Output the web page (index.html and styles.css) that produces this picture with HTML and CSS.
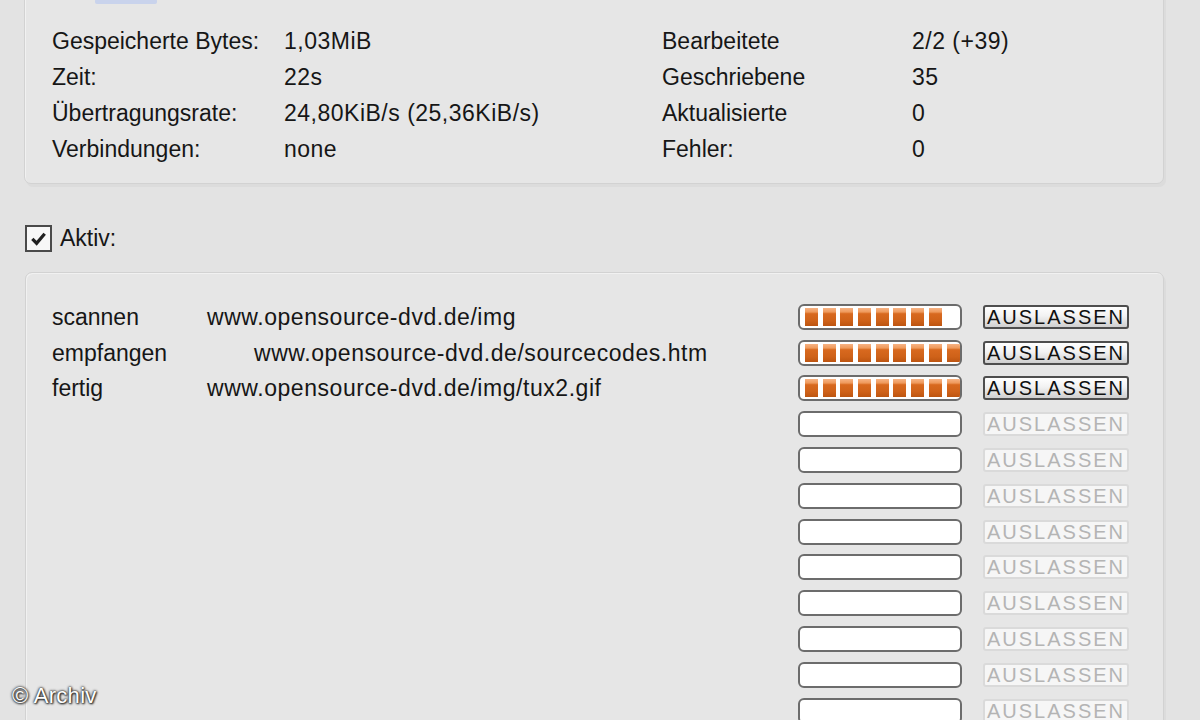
FILE: index.html
```html
<!DOCTYPE html>
<html lang="de">
<head>
<meta charset="utf-8">
<title>Statistik</title>
<link rel="stylesheet" href="styles.css">
</head>
<body>
<div class="page">
  <section class="group stats">
    <span class="legend"></span>
    <div class="stat-grid">
      <span>Gespeicherte Bytes:</span><span class="val">1,03MiB</span><span>Bearbeitete</span><span class="val">2/2 (+39)</span>
      <span>Zeit:</span><span class="val">22s</span><span>Geschriebene</span><span class="val">35</span>
      <span>Übertragungsrate:</span><span class="val">24,80KiB/s (25,36KiB/s)</span><span>Aktualisierte</span><span class="val">0</span>
      <span>Verbindungen:</span><span class="val">none</span><span>Fehler:</span><span class="val">0</span>
    </div>
  </section>

  <label class="check-row">
    <span class="checkbox">
      <svg viewBox="0 0 20 20" width="19" height="19"><path d="M3.5 10.5 L8 15 L16.5 5" fill="none" stroke="#202020" stroke-width="3.4" stroke-linejoin="miter"/></svg>
    </span>
    <span>Aktiv:</span>
  </label>

  <section class="group jobs">
    <div class="job">
      <span class="name">scannen</span><span class="url">www.opensource-dvd.de/img</span>
      <span class="bar"><i></i><i></i><i></i><i></i><i></i><i></i><i></i><i></i></span>
      <span class="btn">AUSLASSEN</span>
    </div>
    <div class="job">
      <span class="name">empfangen</span><span class="url indent">www.opensource-dvd.de/sourcecodes.htm</span>
      <span class="bar"><i></i><i></i><i></i><i></i><i></i><i></i><i></i><i></i><i></i></span>
      <span class="btn">AUSLASSEN</span>
    </div>
    <div class="job">
      <span class="name">fertig</span><span class="url">www.opensource-dvd.de/img/tux2.gif</span>
      <span class="bar"><i></i><i></i><i></i><i></i><i></i><i></i><i></i><i></i><i></i></span>
      <span class="btn">AUSLASSEN</span>
    </div>
    <div class="job"><span class="name"></span><span class="url"></span><span class="bar"></span><span class="btn off">AUSLASSEN</span></div>
    <div class="job"><span class="name"></span><span class="url"></span><span class="bar"></span><span class="btn off">AUSLASSEN</span></div>
    <div class="job"><span class="name"></span><span class="url"></span><span class="bar"></span><span class="btn off">AUSLASSEN</span></div>
    <div class="job"><span class="name"></span><span class="url"></span><span class="bar"></span><span class="btn off">AUSLASSEN</span></div>
    <div class="job"><span class="name"></span><span class="url"></span><span class="bar"></span><span class="btn off">AUSLASSEN</span></div>
    <div class="job"><span class="name"></span><span class="url"></span><span class="bar"></span><span class="btn off">AUSLASSEN</span></div>
    <div class="job"><span class="name"></span><span class="url"></span><span class="bar"></span><span class="btn off">AUSLASSEN</span></div>
    <div class="job"><span class="name"></span><span class="url"></span><span class="bar"></span><span class="btn off">AUSLASSEN</span></div>
    <div class="job"><span class="name"></span><span class="url"></span><span class="bar"></span><span class="btn off">AUSLASSEN</span></div>
  </section>
</div>
<div class="credit">© Archiv</div>
</body>
</html>
```
FILE: styles.css
```css
html, body {
  margin: 0;
  padding: 0;
  background: #e3e3e3;
  overflow: hidden;
}
body {
  width: 1200px;
  height: 720px;
  position: relative;
  font-family: "Liberation Sans", Arial, sans-serif;
  font-size: 23px;
  color: #161616;
}
.page {
  display: flex;
  flex-direction: column;
}
.group {
  border: 1px solid #d2d2d2;
  border-radius: 7px;
  background: #e6e6e6;
  box-shadow: inset 1px 1px 0 #f1f1f1, 2px 3px 0 #dcdcdc;
  box-sizing: border-box;
  position: relative;
}
.stats {
  margin: -22px 0 0 24px;
  width: 1140px;
  height: 206px;
  padding: 44px 0 0 27px;
}
.legend {
  position: absolute;
  top: 20px;
  left: 70px;
  width: 62px;
  height: 5px;
  border-radius: 2px;
  background: #c9d3ec;
}
.stat-grid {
  display: grid;
  grid-template-columns: 232px 378px 250px auto;
  grid-auto-rows: 36px;
  align-items: center;
  line-height: 26px;
}
.val { letter-spacing: 0.5px; }
.check-row {
  display: flex;
  align-items: center;
  gap: 8px;
  margin: 40px 0 0 25px;
  height: 28px;
}
.checkbox {
  width: 23px;
  height: 23px;
  border: 2px solid #4a4a4a;
  background: #f7f7f7;
  display: flex;
  align-items: center;
  justify-content: center;
}
.jobs {
  margin: 20px 0 0 25px;
  width: 1139px;
  height: 520px;
  padding: 26px 0 0 26px;
}
.job {
  display: grid;
  grid-template-columns: 155px 591px 164px 146px;
  height: 35.8px;
  align-items: center;
}
.job .btn { margin-left: 21px; }
.name, .url {
  white-space: nowrap;
  line-height: 26px;
}
.url { letter-spacing: 0.55px; }
.url.indent { padding-left: 47px; }
.bar {
  height: 26px;
  box-sizing: border-box;
  border: 2px solid #6c6c6c;
  border-radius: 6px;
  background: #ffffff;
  display: flex;
  align-items: center;
  gap: 4.7px;
  padding-left: 5px;
  overflow: hidden;
}
.bar i {
  display: block;
  flex: 0 0 13px;
  height: 18px;
  background: linear-gradient(#f7b384 0, #ef9a5c 22%, #d8691f 32%, #cf6219 70%, #bd5511 100%);
}
.btn {
  width: 146px;
  height: 24px;
  box-sizing: border-box;
  border: 2px solid #4e4e4e;
  border-radius: 3px;
  background: linear-gradient(#ffffff 0, #f2f2f2 45%, #cfcfcf 100%);
  font-size: 20px;
  letter-spacing: 2px;
  line-height: 21px;
  text-align: center;
  color: #111;
  overflow: hidden;
  white-space: nowrap;
}
.btn.off {
  border-color: #dadada;
  background: #f6f6f6;
  color: #b4b4b4;
}
.credit {
  position: absolute;
  left: 12px;
  top: 683px;
  font-size: 22px;
  letter-spacing: 0.3px;
  color: #ffffff;
  text-shadow: 0 0 3px #222, 0 0 2px #222, 1px 1px 2px #333;
}
```
